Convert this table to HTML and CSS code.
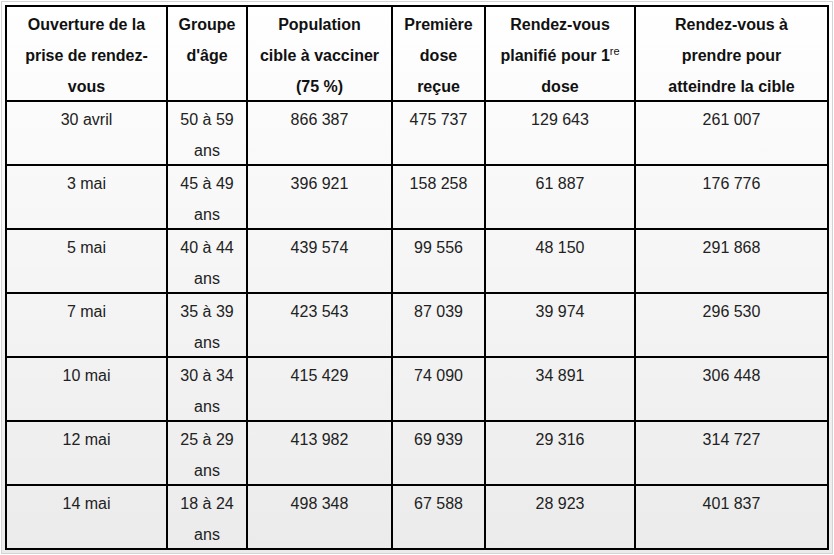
FILE: index.html
```html
<!DOCTYPE html>
<html lang="fr">
<head>
<meta charset="utf-8">
<title>Rendez-vous vaccination</title>
<link rel="stylesheet" href="styles.css">
</head>
<body>
<div class="frame">
<table class="grid">
<thead>
<tr>
<th class="c1"><div class="in">Ouverture de la prise de rendez-vous</div></th>
<th class="c2"><div class="in">Groupe d'âge</div></th>
<th class="c3"><div class="in">Population cible à vacciner (75 %)</div></th>
<th class="c4"><div class="in">Première dose reçue</div></th>
<th class="c5"><div class="in">Rendez-vous planifié pour 1<sup class="sup">re</sup> dose</div></th>
<th class="c6"><div class="in">Rendez-vous à prendre pour atteindre la cible</div></th>
</tr>
</thead>
<tbody>
<tr><td><div class="in">30 avril</div></td><td class="c2"><div class="in">50 à 59 ans</div></td><td class="c3"><div class="in">866 387</div></td><td><div class="in">475 737</div></td><td><div class="in">129 643</div></td><td class="c6"><div class="in">261 007</div></td></tr>
<tr><td><div class="in">3 mai</div></td><td class="c2"><div class="in">45 à 49 ans</div></td><td class="c3"><div class="in">396 921</div></td><td><div class="in">158 258</div></td><td><div class="in">61 887</div></td><td class="c6"><div class="in">176 776</div></td></tr>
<tr><td><div class="in">5 mai</div></td><td class="c2"><div class="in">40 à 44 ans</div></td><td class="c3"><div class="in">439 574</div></td><td><div class="in">99 556</div></td><td><div class="in">48 150</div></td><td class="c6"><div class="in">291 868</div></td></tr>
<tr><td><div class="in">7 mai</div></td><td class="c2"><div class="in">35 à 39 ans</div></td><td class="c3"><div class="in">423 543</div></td><td><div class="in">87 039</div></td><td><div class="in">39 974</div></td><td class="c6"><div class="in">296 530</div></td></tr>
<tr><td><div class="in">10 mai</div></td><td class="c2"><div class="in">30 à 34 ans</div></td><td class="c3"><div class="in">415 429</div></td><td><div class="in">74 090</div></td><td><div class="in">34 891</div></td><td class="c6"><div class="in">306 448</div></td></tr>
<tr><td><div class="in">12 mai</div></td><td class="c2"><div class="in">25 à 29 ans</div></td><td class="c3"><div class="in">413 982</div></td><td><div class="in">69 939</div></td><td><div class="in">29 316</div></td><td class="c6"><div class="in">314 727</div></td></tr>
<tr><td><div class="in">14 mai</div></td><td class="c2"><div class="in">18 à 24 ans</div></td><td class="c3"><div class="in">498 348</div></td><td><div class="in">67 588</div></td><td><div class="in">28 923</div></td><td class="c6"><div class="in">401 837</div></td></tr>
</tbody>
</table>
</div>
</body>
</html>
```
FILE: styles.css
```css
html, body {
  margin: 0;
  padding: 0;
  background: #ffffff;
}
body {
  font-family: "Liberation Sans", Arial, sans-serif;
  font-size: 16px;
}
.frame {
  margin: 1px;
  border: 1px solid #d4d4d4;
  padding: 3px;
  background: linear-gradient(#ffffff, #ebebeb);
  height: 545px;
}
.grid {
  width: 824px;
  table-layout: fixed;
  border-collapse: separate;
  border-spacing: 0;
  border-top: 2px solid #000;
  border-left: 2px solid #000;
}
.grid th,
.grid td {
  box-sizing: border-box;
  border-right: 2px solid #000;
  border-bottom: 2px solid #000;
  padding: 0 8px;
  text-align: center;
  vertical-align: top;
  line-height: 31px;
}
.grid th {
  font-weight: bold;
  color: #111;
  height: 95px;
}
.grid td {
  color: #222;
  height: 64px;
}
.in {
  padding-top: 2px;
  margin-bottom: -2px;
}
.c1 { width: 161px; }
.c2 { width: 80px; }
.grid .c2 { padding: 0 4px; }
.c3 { width: 145px; }
.grid .c3 { padding: 0 11px; }
.c4 { width: 93px; }
.c5 { width: 150px; }
.c6 { width: 193px; }
.grid .c6 { padding: 0 12px; }
.sup {
  font-size: 11px;
  font-weight: normal;
  line-height: 0;
  vertical-align: 6px;
}
```
